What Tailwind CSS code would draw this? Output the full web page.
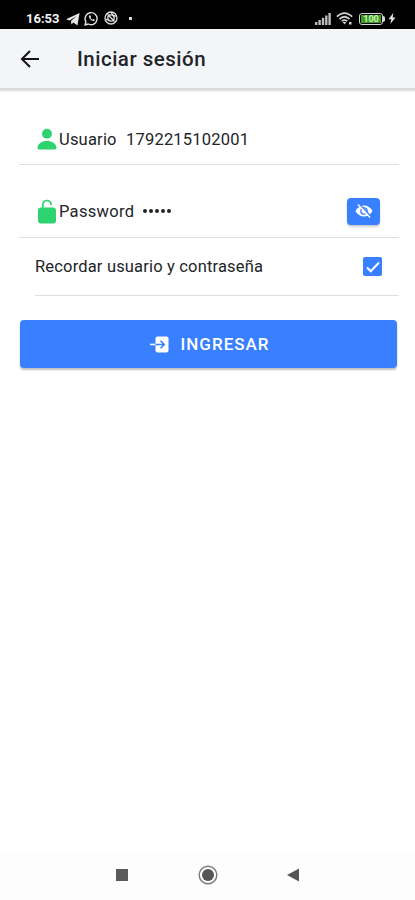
<!DOCTYPE html>
<html lang="es">

<head>
    <meta charset="UTF-8">
    <meta name="viewport" content="width=device-width, initial-scale=1.0">
    <title>Iniciar sesión</title>
    <script src="https://cdn.jsdelivr.net/npm/@tailwindcss/browser@4"></script>
</head>

<body class="h-screen flex flex-col overflow-hidden bg-white font-['Roboto',sans-serif] text-[#222428]">
    <!-- Status Bar -->
    <div class="h-[29px] shrink-0 bg-black flex items-start pt-[11px] pl-[26px] pr-[19px] text-[#f2f2f2]">
        <span class="text-[13px] leading-4 font-bold w-[40px] whitespace-nowrap">16:53</span>
        <!-- Telegram -->
        <svg class="w-[14px] h-[14px] mt-px" viewBox="0 0 14 14" fill="#e8e8e8">
            <path d="M0 7.2 13.6 1 11.4 13.4 7.4 10.4 5.4 12.6 5 9.1 10.6 4 3.6 8.5z" />
        </svg>
        <!-- WhatsApp -->
        <svg class="w-[15px] h-[15px] ml-[4px]" viewBox="0 0 15 15" fill="none" stroke="#e0e0e0" stroke-width="1.4">
            <path d="M1 14 1.9 10.7A6 6 0 1 1 4.3 13z" stroke-linejoin="round" />
            <path d="M5 4.5c-.7 2.4 2.3 5.8 5.3 5.6l.5-1.4-1.6-.8-.9.8C7.5 8.2 6.9 7.5 6.5 6.7l.7-.8-.7-1.5z" fill="#e0e0e0" stroke="none" />
        </svg>
        <svg class="w-[14px] h-[14px] ml-[5px]" viewBox="0 0 14 14" fill="none" stroke="#e0e0e0" stroke-width="1.3">
            <circle cx="7" cy="7" r="6" />
            <circle cx="7" cy="7" r="3.2" />
            <path d="M3.5 3.3 10.5 10.5M7 1.2 10 6M1.5 8 6 9.5M12.5 5.5 9 4" />
        </svg>
        <span class="w-[3px] h-[3px] mt-[6px] ml-[11px] bg-[#d8d8d8]"></span>

        <!-- Signal -->
        <svg class="w-[16px] h-[12px] mt-[2px] ml-auto" viewBox="0 0 16 12" fill="#bdbdbd">
            <path d="M0 9h2.4v3H0zM3.4 7h2.4v5H3.4zM6.8 4.7h2.4V12H6.8zM10.1 2.5h2.4V12h-2.4zM13.4 0h2.4v12h-2.4z" />
        </svg>
        <!-- Wifi -->
        <svg class="w-[17px] h-[13px] mt-px ml-[5px]" viewBox="0 0 17 13" fill="none" stroke="#d0d0d0" stroke-width="1.7">
            <path d="M.8 4.7Q8.5-2.4 16.2 4.7M3.5 7Q8.5 2.5 13.5 7M5.8 9.2Q8.5 7 11.2 9.2" />
            <path d="M6.6 10h3.8L8.5 12.5zM13 10h2.5v2.5H13z" fill="#d0d0d0" stroke="none" />
        </svg>
        <!-- Battery -->
        <div class="flex items-center h-[13px] mt-px ml-[6px]">
            <div class="w-[24px] h-[12px] rounded-[3px] border border-[#d5d5d5] p-px">
                <div class="h-full bg-[#3c9b20] text-[9px] leading-[8px] font-bold text-[#c9f5b5] text-center">100</div>
            </div>
            <span class="w-[2px] h-[6px] bg-[#d5d5d5] rounded-r-sm"></span>
        </div>
        <svg class="w-[8px] h-[11px] mt-[2px] ml-[3px]" viewBox="0 0 7 11" fill="#e5e5e5">
            <path d="M4.8 0 0 6.2h2.8L1.8 11 7 4.5H4.2z" />
        </svg>
    </div>

    <!-- Toolbar -->
    <header class="h-[59px] shrink-0 bg-[#f4f5f8] flex items-center shadow-[0_2px_2px_1px_rgba(0,0,0,0.15)]">
        <svg class="w-[19px] h-[18px] ml-[20px]" viewBox="0 0 19 18" fill="none" stroke="#111" stroke-width="2">
            <path d="M10 1 2 9l8 8M2 9h17" />
        </svg>
        <h1 class="ml-[38px] pt-px text-[20.5px] font-medium tracking-[0.5px] text-[#222428]">Iniciar sesión</h1>
    </header>

    <!-- Login form -->
    <main class="flex-1 pl-[19px] pr-[16px] pt-[25px] text-[16.5px]">
        <div class="h-[52px] border-b border-[#dedede] flex items-center pl-[18px]">
            <svg class="w-[20px] h-[22px]" viewBox="0 0 21 22" fill="#2dd36f">
                <circle cx="10.5" cy="5.4" r="5.2" />
                <path d="M.5 20.5C.5 15.8 5 13 10.5 13s10 2.8 10 7.5c0 .9-.5 1.5-1.5 1.5H2C1 22 .5 21.4.5 20.5z" />
            </svg>
            <label class="ml-[2px] w-[67px] pt-[3px] tracking-[0.2px]">Usuario</label>
            <span class="pt-[3px] tracking-[0.2px]">1792215102001</span>
        </div>

        <div class="h-[73px] border-b border-[#dedede] flex items-center pt-[20px] pl-[19px]">
            <svg class="w-[18px] h-[25px] shrink-0" viewBox="0 0 18 25">
                <path d="M4.8 10V5.2A4.2 4.2 0 0 1 13 4.5v1" fill="none" stroke="#2dd36f" stroke-width="1.7" stroke-linecap="round" />
                <rect y="8.5" width="18" height="16" rx="3" fill="#2dd36f" />
            </svg>
            <label class="ml-[3px] w-[84px] pt-[3px] tracking-[0.3px]">Password</label>
            <span class="flex gap-[2.5px]">
                <i class="size-[3.5px] rounded-full bg-[#222428]"></i>
                <i class="size-[3.5px] rounded-full bg-[#222428]"></i>
                <i class="size-[3.5px] rounded-full bg-[#222428]"></i>
                <i class="size-[3.5px] rounded-full bg-[#222428]"></i>
                <i class="size-[3.5px] rounded-full bg-[#222428]"></i>
            </span>
            <button class="ml-auto mr-[19px] w-[33px] h-[27px] rounded-[4px] bg-[#3880ff] shadow-[0_2px_2px_rgba(0,0,0,0.2)] flex items-center justify-center">
                <svg class="w-[18px] h-[14px]" viewBox="0 0 18 14">
                    <path d="M.5 7C2.5 3.4 5.5 1.5 9 1.5s6.5 1.9 8.5 5.5c-2 3.6-5 5.5-8.5 5.5S2.5 10.6.5 7z" fill="#fff" />
                    <circle cx="9" cy="7" r="3.2" fill="none" stroke="#3880ff" stroke-width="1.3" />
                    <path d="M4.5 0 16 12.5" stroke="#3880ff" stroke-width="1.4" />
                    <path d="M3 .5 15 13.5" stroke="#fff" stroke-width="1.3" />
                </svg>
            </button>
        </div>

        <div class="h-[58px] ml-[16px] border-b border-[#dedede] flex items-center justify-between pr-[17px]">
            <span class="tracking-[0.17px] pt-[2px]">Recordar usuario y contraseña</span>
            <span class="size-[19px] rounded-[2px] bg-[#3880ff] flex items-center justify-center">
                <svg class="w-[14px] h-[12px]" viewBox="0 0 14 12" fill="none" stroke="#fff" stroke-width="2">
                    <path d="M1 6.5 4.8 10.3 13 1.5" />
                </svg>
            </span>
        </div>

        <button class="mt-[24px] ml-px w-[377px] h-[48px] rounded-[4px] bg-[#3880ff] text-white flex items-center justify-center pl-[3px] shadow-[0_2px_2px_rgba(0,0,0,0.25)]">
            <svg class="w-[19px] h-[17px] mr-[11px]" viewBox="0 0 19 17" fill="none">
                <rect x="5.5" y=".5" width="13" height="16" rx="2" fill="#fff" />
                <path d="M0 8.5h5.5" stroke="#fff" stroke-width="1.6" />
                <path d="M5.5 8.5H14M10.5 4.7l3.8 3.8-3.8 3.8" stroke="#3880ff" stroke-width="1.6" />
            </svg>
            <span class="text-[17px] font-medium tracking-[1px] pt-px">INGRESAR</span>
        </button>
    </main>

    <!-- Navigation Bar -->
    <nav class="h-[50px] shrink-0 bg-[#fdfdfd] flex items-center pl-[116px]">
        <span class="size-[12px] bg-[#5a5a5a]"></span>
        <svg class="size-[20px] ml-[70px]" viewBox="0 0 20 20">
            <circle cx="10" cy="10" r="8.8" fill="none" stroke="#777" stroke-width="1.4" />
            <circle cx="10" cy="10" r="6" fill="#555" />
        </svg>
        <svg class="w-[12px] h-[14px] ml-[69px]" viewBox="0 0 12 14" fill="#555">
            <path d="M0 7 12 .5v13z" />
        </svg>
    </nav>
</body>

</html>
